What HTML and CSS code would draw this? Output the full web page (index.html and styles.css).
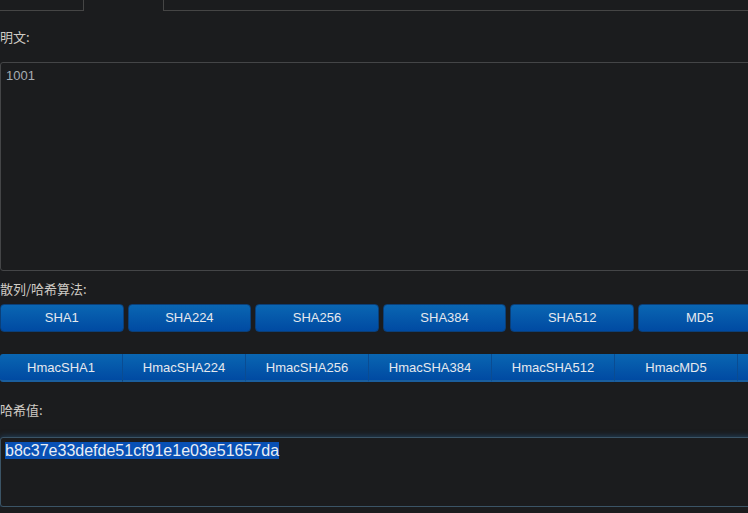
FILE: index.html
```html
<!DOCTYPE html>
<html lang="zh">
<head>
<meta charset="utf-8">
<title>Hash</title>
<link rel="stylesheet" href="styles.css">
</head>
<body>
<div class="page">
  <div class="tabs">
    <div class="tab tab-first"></div>
    <div class="tab tab-active"></div>
    <div class="tab tab-rest"></div>
  </div>
  <div class="label label-plain">明文:</div>
  <div class="box box-input">1001</div>
  <div class="label label-algo">散列/哈希算法:</div>
  <div class="btn-row">
    <div class="btn">SHA1</div>
    <div class="btn">SHA224</div>
    <div class="btn">SHA256</div>
    <div class="btn">SHA384</div>
    <div class="btn">SHA512</div>
    <div class="btn">MD5</div>
  </div>
  <div class="btn-group">
    <div class="gbtn">HmacSHA1</div>
    <div class="gbtn">HmacSHA224</div>
    <div class="gbtn">HmacSHA256</div>
    <div class="gbtn">HmacSHA384</div>
    <div class="gbtn">HmacSHA512</div>
    <div class="gbtn">HmacMD5</div>
    <div class="gbtn"></div>
  </div>
  <div class="label label-hash">哈希值:</div>
  <div class="box box-output"><span class="sel">b8c37e33defde51cf91e1e03e51657da</span></div>
</div>
</body>
</html>
```

FILE: styles.css
```css
html, body {
  margin: 0;
  padding: 0;
  background: #1b1c1e;
  overflow: hidden;
}
.page {
  width: 900px;
  font-family: "Liberation Sans", "Noto Sans CJK SC", sans-serif;
  font-size: 13px;
  color: #c9c9c9;
}
.tabs {
  display: flex;
  height: 11px;
}
.tab {
  height: 10px;
  box-sizing: content-box;
}
.tab-first {
  width: 83px;
  border-right: 1px solid #454545;
  border-bottom: 1px solid #454545;
}
.tab-active {
  width: 79px;
}
.tab-rest {
  flex: 1;
  border-left: 1px solid #454545;
  border-bottom: 1px solid #454545;
}
.label {
  font-family: "Noto Sans CJK SC", "Liberation Sans", sans-serif;
  font-size: 13px;
  line-height: 16px;
  color: #cfcbc4;
}
.label-plain {
  padding: 18px 0 17px 0;
}
.box {
  box-sizing: border-box;
  width: 800px;
  border: 1px solid #444547;
  border-radius: 3px;
  background: #1b1c1e;
}
.box-input {
  height: 209px;
  padding: 5px 5px;
  line-height: 16px;
  color: #a7adb3;
  font-size: 13px;
}
.label-algo {
  padding: 10px 0 7px 0;
}
.btn-row {
  display: flex;
  gap: 4px;
  height: 28px;
}
.btn {
  flex: 0 0 123.6px;
  box-sizing: border-box;
  height: 28px;
  border: 1px solid #0b3f78;
  border-radius: 4px;
  background: linear-gradient(#0a66b2, #004aa2);
  color: #e6e9ee;
  font-size: 13px;
  line-height: 26px;
  text-align: center;
}
.btn-group {
  display: flex;
  margin-top: 22px;
  height: 28px;
}
.gbtn {
  flex: 0 0 123px;
  box-sizing: border-box;
  height: 28px;
  border-right: 1px solid #0a4c92;
  border-bottom: 2px solid #1a5e9e;
  background: linear-gradient(#0a66b2, #004aa2);
  color: #e6e9ee;
  font-size: 13px;
  line-height: 27px;
  text-align: center;
}
.gbtn:first-child {
  border-top-left-radius: 3px;
  border-bottom-left-radius: 3px;
}
.label-hash {
  padding: 20px 0 19px 0;
}
.box-output {
  height: 70px;
  padding: 4px 4px;
  border-color: #3b5466;
  box-shadow: 0 0 6px rgba(40, 110, 170, 0.55);
  font-family: "Liberation Sans", sans-serif;
  font-size: 16px;
  line-height: 18px;
  color: #dfe6ee;
}
.sel {
  background: #0850b4;
  color: #e8eef5;
}
```
